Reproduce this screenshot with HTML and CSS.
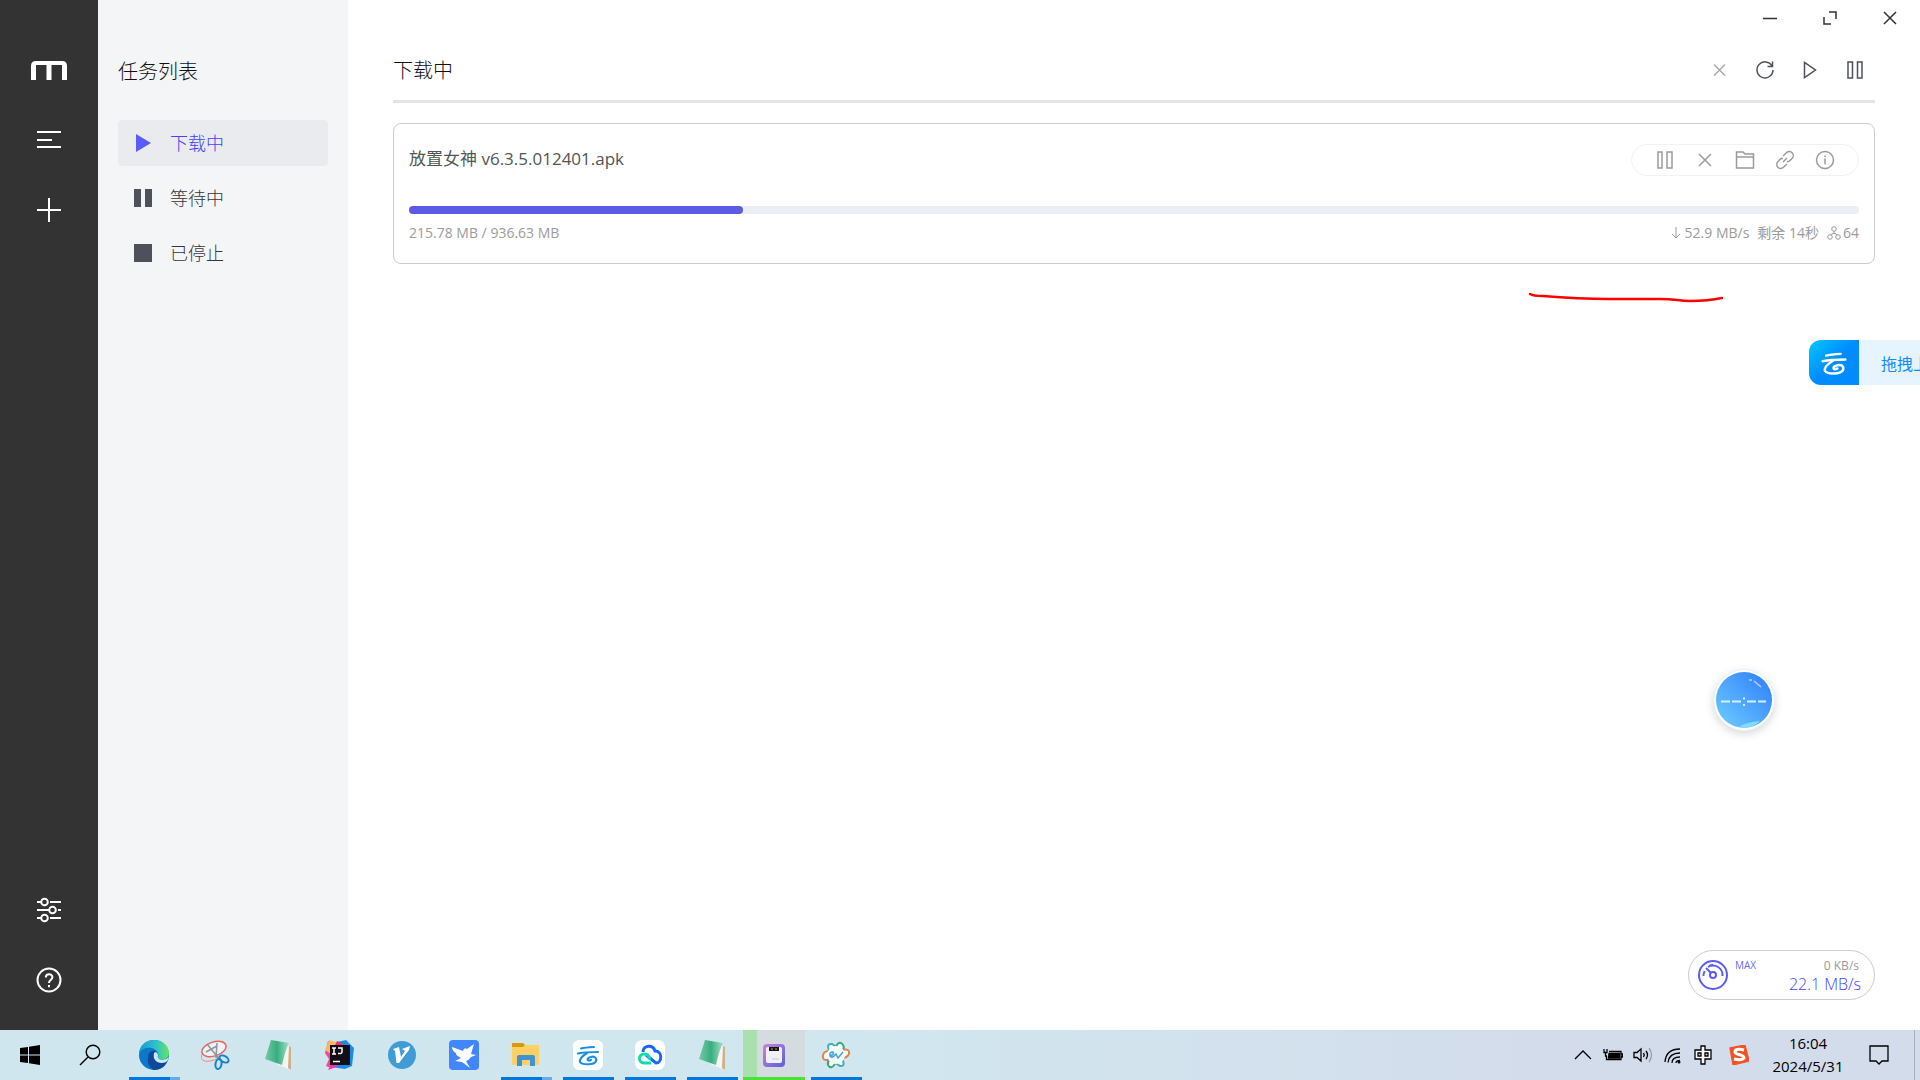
FILE: index.html
```html
<!DOCTYPE html>
<html lang="zh-CN">
<head>
    <meta charset="UTF-8">
    <meta name="viewport" content="width=device-width, initial-scale=1.0">
    <title>下载中</title>
    <link rel="stylesheet" href="styles.css">
</head>
<body>
<div class="app">
    <aside class="sidebar">
        <svg class="logo" width="36" height="20" viewBox="0 0 36 20"><path d="M0 19V5Q0 0 5 0H31Q36 0 36 5V19H31V4H20.500V19H15.500V4H5V19Z" fill="#fff"/></svg>
        <button class="side-btn" aria-label="任务列表"><svg width="26" height="20" viewBox="0 0 26 20"><path d="M1 2H25M1 10H16M1 17H25" stroke="#fff" stroke-width="2"/></svg></button>
        <button class="side-btn" aria-label="新建任务"><svg width="24" height="24" viewBox="0 0 24 24"><path d="M12 0V24M0 12H24" stroke="#fff" stroke-width="2"/></svg></button>
        <button class="side-btn side-bottom" aria-label="偏好设置"><svg width="26" height="26" viewBox="0 0 26 26" fill="none" stroke="#fff" stroke-width="2"><path d="M1 5H5M14 5H25M1 13H13M22 13H25M1 21H5M14 21H25"/><circle cx="8.500" cy="5" r="3.300"/><circle cx="16.500" cy="13" r="3.300"/><circle cx="8.500" cy="21" r="3.300"/></svg></button>
        <button class="side-btn" aria-label="帮助"><svg width="26" height="26" viewBox="0 0 26 26" fill="none" stroke="#fff" stroke-width="2"><circle cx="13" cy="13" r="11.500"/><path d="M9.800 10.500C9.800 6.200 16.400 6.200 16.400 10.300C16.400 12.800 13 12.800 13 16M13 18V20.200"/></svg></button>
    </aside>

    <nav class="subnav">
        <h3>任务列表</h3>
        <a class="nav-item active" href="#"><svg width="18" height="18" viewBox="0 0 18 18"><path d="M2 0L17 9L2 18Z"/></svg>下载中</a>
        <a class="nav-item" href="#"><svg width="18" height="18" viewBox="0 0 18 18"><path d="M0 0H7V18H0ZM11 0H18V18H11Z"/></svg>等待中</a>
        <a class="nav-item" href="#"><svg width="18" height="18" viewBox="0 0 18 18"><path d="M0 0H18V18H0Z"/></svg>已停止</a>
    </nav>

    <main class="main">
        <div class="window-bar">
            <button aria-label="最小化"><svg width="14" height="14" viewBox="0 0 14 14"><path d="M0 7.500H14"/></svg></button>
            <button aria-label="最大化"><svg width="14" height="14" viewBox="0 0 14 14"><path d="M6 1H13V8M1 6V13H8"/></svg></button>
            <button aria-label="关闭"><svg width="14" height="14" viewBox="0 0 14 14"><path d="M1 1L13 13M13 1L1 13"/></svg></button>
        </div>
        <header class="panel-header">
            <h3>下载中</h3>
            <div class="panel-actions">
                <button class="disabled" aria-label="删除任务" disabled><svg width="20" height="20" viewBox="0 0 20 20"><path d="M4 4.500L15 15.500M15 4.500L4 15.500"/></svg></button>
                <button aria-label="刷新"><svg width="20" height="20" viewBox="0 0 20 20"><path d="M17 6A8 8 0 1 0 18 10M17.500 1.500V6.500H12.500"/></svg></button>
                <button aria-label="全部开始"><svg width="20" height="20" viewBox="0 0 20 20"><path d="M4.500 2.500V17.500L15.500 10Z"/></svg></button>
                <button aria-label="全部暂停"><svg width="20" height="20" viewBox="0 0 20 20"><path d="M3 2H7.500V18H3ZM12.500 2H17V18H12.500Z"/></svg></button>
            </div>
        </header>

        <section class="task">
            <div class="task-top">
                <div class="task-name">放置女神 v6.3.5.012401.apk</div>
                <div class="task-actions">
                    <button aria-label="暂停"><svg width="20" height="20" viewBox="0 0 20 20"><path d="M3 2H7V18H3ZM12 2H17V18H12Z"/></svg></button>
                    <button aria-label="删除"><svg width="20" height="20" viewBox="0 0 20 20"><path d="M4 4L16 16M16 4L4 16"/></svg></button>
                    <button aria-label="打开文件夹"><svg width="20" height="20" viewBox="0 0 20 20"><path d="M1.500 18V2H8L10 4H18.500V18ZM1.500 7H18.500"/></svg></button>
                    <button aria-label="复制链接"><svg width="20" height="20" viewBox="0 0 20 20"><path d="M8 6L11.500 2.700A3.800 3.800 0 0 1 17 8.500L15 10.500Q13.500 12 12 11.500M12 14L8.500 17.300A3.800 3.800 0 0 1 3 11.500L5 9.500Q6.500 8 8 8.500M8 12L12 8"/></svg></button>
                    <button aria-label="详情"><svg width="20" height="20" viewBox="0 0 20 20"><circle cx="10" cy="10" r="8.500"/><path d="M10 8.500V14.500M10 5.500V7"/></svg></button>
                </div>
            </div>
            <div class="progress"><div class="progress-fill" style="width: 23.04%"></div></div>
            <div class="task-info">
                <span>215.78 MB / 936.63 MB</span>
                <div class="task-speed">
                    <span><svg width="10" height="12" viewBox="0 0 10 12"><path d="M5 0V11M1 7L5 11L9 7"/></svg>52.9 MB/s</span>
                    <span>剩余 14秒</span>
                    <span class="peers"><svg width="14" height="14" viewBox="0 0 14 14"><circle cx="7" cy="3" r="2.300"/><circle cx="3" cy="11" r="2.300"/><circle cx="11" cy="11" r="2.300"/><path d="M7 5V7.500M4 9Q4 7.500 7 7.500T10 9"/></svg>64</span>
                </div>
            </div>
        </section>
    </main>

    <div class="speedometer">
        <svg width="30" height="30" viewBox="0 0 30 30" fill="none" stroke="#5b5bfa" stroke-width="2"><circle cx="15" cy="15" r="14"/><circle cx="15" cy="15" r="3"/><path d="M13 13L8 8M10 7A9.500 9.500 0 0 1 24.500 16M11 5.800A10 10 0 0 1 15 5M5.500 16A9.500 9.500 0 0 1 6.700 11"/></svg>
        <em>MAX</em>
        <div class="speed-values">
            <span class="upload">0 KB/s</span>
            <span class="download">22.1 MB/s</span>
        </div>
    </div>

    <svg class="pen-line" width="200" height="16" viewBox="0 0 200 16"><path d="M2 4Q5 6 15 6Q50 9 82 9T132 9C148 9 150 11 162 11Q180 11 194 8" fill="none" stroke="#f00" stroke-width="2.500" stroke-linecap="round"/></svg>

    <div class="upload-dock">
        <div class="dock-icon"><svg width="34" height="34" viewBox="0 0 30 30" fill="none" stroke="#fff" stroke-linecap="round"><use href="#yun"/></svg></div>
        <span>拖拽上</span>
    </div>

    <svg class="ball" width="76" height="76" viewBox="0 0 76 76">
        <defs><linearGradient id="ballFill" x1="0" y1="1" x2="1" y2="0"><stop offset="0" stop-color="#70ceff"/><stop offset="1" stop-color="#2c7cff"/></linearGradient></defs>
        <circle cx="38" cy="38" r="30.500" fill="#fff" stroke="#e1f1fb"/>
        <circle cx="38" cy="38" r="28" fill="url(#ballFill)"/>
        <path d="M33 65Q40 60 54 59Q47 66 38 66Z" fill="#81ddff"/>
        <path d="M15 39.500H24M26 39.500H35M41 39.500H50M52 39.500H60" stroke="#d5efff" stroke-width="2"/>
        <path d="M43 18H46M48 19L55 25" stroke="#b2d4ff" stroke-width="1.500" fill="none"/>
        <circle cx="38" cy="36.500" r="1" fill="#fff"/><circle cx="38" cy="43" r="1" fill="#fff"/>
    </svg>
</div>

<footer class="taskbar">
    <button class="tb-system" aria-label="开始"><svg width="20" height="20" viewBox="0 0 20 20"><path d="M0 3L8 2V9.500H0ZM9 1.800L20 0V9.500H9ZM0 10.500H8V18L0 17ZM9 10.500H20V20L9 18.200Z"/></svg></button>
    <button class="tb-system" aria-label="搜索"><svg width="22" height="22" viewBox="0 0 22 22" fill="none" stroke="#000" stroke-width="1.500"><circle cx="14" cy="8" r="6.800"/><path d="M9 13L1 21"/></svg></button>
    <div class="tb-apps">
        <button class="tb-app running multi" aria-label="Edge"><svg width="30" height="30" viewBox="0 0 30 30">
            <defs><linearGradient id="edgeTop"><stop offset="0" stop-color="#159bd7"/><stop offset=".6" stop-color="#33c4c5"/><stop offset="1" stop-color="#65e65b"/></linearGradient></defs>
            <circle cx="15" cy="15" r="15" fill="#0b78c9"/><path d="M0 13C1 5 7 0 15 0C24 0 30 6 30 13C30 19 24 21 20 19C18 18 20 17 19 13C17 7 5 5 0 13Z" fill="url(#edgeTop)"/><path d="M9 18C9 12 13 10 17 11Q12 14 15 19Q20 25 28 22Q24 30 15 30C11 28 8 24 9 18Z" fill="#10499a"/><path d="M15 13Q18 11 19 15Q18 18 21 19.500Q26 21 30 17Q29 21 27 22Q18 25 15 18Z" fill="#d1e7ee"/></svg></button>
        <button class="tb-app" aria-label="截图工具"><svg width="30" height="30" viewBox="0 0 30 30" fill="none"><ellipse cx="13" cy="9" rx="12.500" ry="7" transform="rotate(-18 13 9)" fill="#edf2f5" stroke="#ee6262" stroke-width="1.500"/><path d="M1 14C-2 22 6 23 16 19" stroke="#e88"/><path d="M6 4L19 20M16 3L15 18M5 12L16 6" stroke="#8c969b" stroke-width="1.500"/><ellipse cx="17.500" cy="24" rx="3" ry="5" transform="rotate(10 17.500 24)" stroke="#1482cf" stroke-width="2"/><ellipse cx="23" cy="19" rx="5" ry="3" transform="rotate(30 23 19)" stroke="#1482cf" stroke-width="2"/></svg></button>
        <button class="tb-app" aria-label="笔记"><svg width="30" height="30" viewBox="0 0 30 30"><use href="#book"/></svg></button>
        <button class="tb-app" aria-label="IntelliJ IDEA"><svg width="30" height="30" viewBox="0 0 30 30"><path d="M3 1L13 3L6 28L1 26L4 19L0 13Z" fill="#f44792"/><path d="M4 0L14 3L6 14L0 10Z" fill="#f9b66b"/><path d="M12 2L21 0L29 8L27 26L20 29L6 27L20 12Z" fill="#188ce9"/><path d="M12 1L18 4V12H7Z" fill="#f72d65"/><path d="M7 23L3 30L14 26Z" fill="#ef35a9"/><rect x="5" y="5" width="20" height="20" fill="#130d16"/><path d="M7 8H11M9 8V14M7 14H11M13 8H17V12Q17 14 13 13.500M8 21.500H15" stroke="#fff" stroke-width="1.500" fill="none"/></svg></button>
        <button class="tb-app" aria-label="V"><svg width="30" height="30" viewBox="0 0 30 30"><circle cx="15" cy="15" r="14" fill="#409cd5"/><path d="M6 9L12 7L14 17L18 11L15 9L23 6L22 10L12 23H9.500L8 11Z" fill="#fff"/></svg></button>
        <button class="tb-app" aria-label="飞鸟"><svg width="30" height="30" viewBox="0 0 30 30"><rect width="30" height="30" rx="4" fill="#4186fc"/><path d="M3 7L14 11Q15 7 18 9L25 4L22 14L27 15L22 17Q20 20 17 21L21 28L13 22L6 21L12 18Q6 15 7 13Q3 11 3 7Z" fill="#fff"/></svg></button>
        <button class="tb-app running multi" aria-label="文件资源管理器"><svg width="30" height="30" viewBox="0 0 30 30"><path d="M1 3H12L14 5V9H1Z" fill="#df9700"/><path d="M1 7H12L14 5H28V25H1Z" fill="#ffd064"/><path d="M6 26V17Q6 15 8 15H22Q24 15 24 17V26H19V20H11V26Z" fill="#4093d0"/></svg></button>
        <button class="tb-app running" aria-label="天翼云盘"><svg width="30" height="30" viewBox="0 0 30 30" fill="none" stroke="#188fe7" stroke-linecap="round"><defs><g id="yun"><path d="M8 8.500Q12 7.500 21 7" stroke-width="2"/><path d="M5 13.500Q12 12 25 12" stroke-width="2.200"/><path d="M14 13Q6 18 7 22Q9 25 18 24C26 23 24 15 18 17C13 18 14 22 18 20" stroke-width="2.200"/></g></defs><rect width="30" height="30" rx="6" fill="#fff" stroke="none"/><use href="#yun"/></svg></button>
        <button class="tb-app running" aria-label="微云"><svg width="30" height="30" viewBox="0 0 30 30" fill="none" stroke-width="3"><rect width="30" height="30" rx="7" fill="#fff"/><path d="M8 12C8 5 18 4 20 11C28 11 27 23 21 23L11 15" stroke="#1768ff"/><path d="M16 23H9C3 23 3 14 9 14C14 14 15 18 14 20" stroke="#12dcaa"/></svg></button>
        <button class="tb-app running" aria-label="笔记"><svg width="30" height="30" viewBox="0 0 30 30"><defs><linearGradient id="bookFill" x2="1"><stop offset="0" stop-color="#77c8a7"/><stop offset=".5" stop-color="#37ae7f"/><stop offset="1" stop-color="#a5dec8"/></linearGradient><g id="book"><path d="M22 5L28 7V30L13 24Z" fill="#f5f5f1"/><path d="M26 6L28 7V30L25 28Z" fill="#ceb18a"/><path d="M8 0L26 3Q22 11 19 25L2 19Z" fill="url(#bookFill)"/></g></defs><use href="#book"/></svg></button>
        <button class="tb-app running downloading" aria-label="Motrix"><svg width="30" height="30" viewBox="0 0 30 30"><defs><linearGradient id="motrixFill" x2="1" y2="1"><stop offset="0" stop-color="#cc83d9"/><stop offset="1" stop-color="#5861d8"/></linearGradient></defs><rect x="4" y="4" width="22" height="23" rx="4" fill="url(#motrixFill)"/><rect x="7" y="7" width="16" height="16" rx="2" fill="#f2f0f7"/><path d="M10 7H20V11H10Z" fill="#17171b"/><path d="M12 9H14M16 9H18" stroke="#c2a52b"/><path d="M13 19H20" stroke="#c9c7d0"/></svg></button>
        <button class="tb-app running" aria-label="EV录屏"><svg width="30" height="30" viewBox="0 0 30 30" fill="none" stroke-width="2"><path d="M15 6Q19 0 22 5Q24 8 21 11M14 24Q10 30 7 25Q6 22 9 19" fill="#f4faf7" stroke="#39a67c"/><path d="M21 10Q29 8 28 14Q26 18 21 18M9 19Q1 22 2 15Q3 11 8 11" fill="#f7f8f3" stroke="#d58b50"/><path d="M8 11Q5 3 11 4L17 8M21 19Q25 27 19 26L13 22" fill="#f5fbfa" stroke="#43adb9"/><circle cx="15" cy="15" r="9" fill="#f4fbfc"/><path d="M9 16Q14 14 12 12Q8 12 9 16Q11 19 15 14L17 18L22 12" stroke="#46a3d4" stroke-width="1.500"/></svg></button>
    </div>

    <div class="tray">
        <button aria-label="显示隐藏的图标"><svg width="18" height="20" viewBox="0 0 18 20"><path d="M1 14L9 6L17 14"/></svg></button>
        <button aria-label="电池"><svg width="20" height="20" viewBox="0 0 20 20"><path d="M6 6.500H18V14.500H3.500V11M18 9H19.500V12H18M1 4V7.500H4V4M2.500 8V11H4"/><path d="M6 8.500H16.500V13H5.500Z" fill="#000"/></svg></button>
        <button aria-label="音量"><svg width="20" height="20" viewBox="0 0 20 20"><path d="M1 7.500H4L8 4V16L4 12.500H1ZM10.500 8Q12 10 10.500 12M13 6Q16 10 13 14"/><path d="M16 3Q21 10 16 17" stroke="#98a0ab"/></svg></button>
        <button aria-label="网络"><svg width="20" height="20" viewBox="0 0 20 20"><path d="M2 17Q3 4 17 4M5 17.500Q6 8 17 8M9 18Q9 12 17 12M13 18Q13 15.500 17 15.500"/><circle cx="16" cy="17" r="1.500" fill="#000" stroke="none"/></svg></button>
        <button aria-label="中文输入"><svg width="20" height="20" viewBox="0 0 20 20"><path d="M8 1H12V5H18V14H12V19H8V14H2V5H8ZM5 8V11H8V8ZM12 8V11H15V8Z" fill="#f5f7fa" fill-rule="evenodd"/></svg></button>
        <button class="sogou" aria-label="搜狗输入法"><svg width="20" height="20" viewBox="0 0 20 20"><path d="M1 3L16 0L20 16L4 20Z" fill="#f05324" stroke="#f05324"/><path d="M15 5Q6 3 6 7C6 10 15 9 15 13Q13 16 5 14" stroke="#fff" stroke-width="3"/></svg></button>
        <div class="clock"><span>16:04</span><span>2024/5/31</span></div>
        <button class="notice" aria-label="通知"><svg width="20" height="20" viewBox="0 0 20 20"><path d="M1 1H19V16H13L10 19L7 16H1Z"/></svg></button>
        <div class="show-desktop"></div>
    </div>
</footer>
</body>
</html>
```

FILE: styles.css
```css
* { box-sizing: border-box; }
body {
    margin: 0;
    height: 100vh;
    display: flex;
    flex-direction: column;
    overflow: hidden;
    font-family: "Open Sans", "Noto Sans CJK SC", sans-serif;
    font-weight: 300;
    color: #111;
}
h3 { margin: 0; padding-top: 2px; font-size: 20px; line-height: 28px; font-weight: 300; }
button { display: flex; align-items: center; justify-content: center; padding: 0; border: 0; background: none; cursor: pointer; }
svg { display: block; flex: none; }

.app { position: relative; flex: 1; min-height: 0; display: flex; overflow: hidden; background: #fff; }

/* sidebar */
.sidebar { width: 98px; padding: 61px 0 30px; display: flex; flex-direction: column; align-items: center; gap: 30px; background: #333; }
.logo { margin-bottom: 9px; }
.side-btn { width: 40px; height: 40px; }
.side-bottom { margin-top: auto; }

/* task list */
.subnav { width: 250px; padding: 56px 20px; display: flex; flex-direction: column; gap: 9px; background: #f4f5f7; }
.subnav h3 { margin-bottom: 25px; }
.nav-item { height: 46px; padding: 0 16px; display: flex; align-items: center; gap: 18px; border-radius: 4px; font-size: 18px; line-height: 24px; color: #33363d; text-decoration: none; }
.nav-item svg { fill: #4d515a; }
.nav-item.active { background: #eaebef; color: #4343fa; }
.nav-item.active svg { fill: #5b5bfa; }

/* main panel */
.main { flex: 1; min-width: 0; padding: 0 45px; }
.window-bar { height: 40px; margin-right: -45px; display: flex; justify-content: flex-end; }
.window-bar button { width: 60px; height: 36px; }
.window-bar svg { fill: none; stroke: #333; stroke-width: 1.5; }
.panel-header { height: 63px; display: flex; align-items: center; justify-content: space-between; border-bottom: 3px solid #e4e4e4; }
.panel-actions { display: flex; gap: 25px; padding-right: 10px; }
.panel-actions svg { fill: none; stroke: #4d515a; stroke-width: 1.5; }
.panel-actions .disabled svg { stroke: #a6a8ad; }

.task { margin-top: 20px; padding: 20px 15px; border: 1px solid #ccc; border-radius: 8px; }
.task-top { display: flex; align-items: center; justify-content: space-between; }
.task-name { padding-bottom: 2px; font-size: 17px; line-height: 24px; font-weight: 400; color: #505753; }
.task-actions { display: flex; height: 32px; padding: 0 13px; border: 1px solid #f2f2f2; border-radius: 16px; }
.task-actions button { width: 40px; }
.task-actions svg { fill: none; stroke: #9b9b9b; stroke-width: 1.5; }
.progress { height: 8px; margin-top: 30px; border-radius: 4px; background: #ebeef5; }
.progress-fill { height: 8px; border-radius: 4px; background: #5b5be6; }
.task-info { margin-top: 9px; display: flex; justify-content: space-between; font-size: 14px; line-height: 20px; font-weight: 400; color: #9b9b9b; }
.task-speed { display: flex; gap: 8px; }
.task-speed span { display: flex; align-items: center; gap: 4px; }
.task-speed .peers { gap: 2px; }
.task-speed svg { fill: none; stroke: #9b9b9b; stroke-width: 1; }

/* floating things */
.speedometer { position: absolute; right: 45px; bottom: 30px; width: 187px; height: 50px; padding: 0 13px 0 9px; display: flex; align-items: center; border: 1px solid #ccc; border-radius: 25px; background: #fff; }
.speedometer em { align-self: flex-start; margin: 7px 0 0 7px; font-size: 10px; line-height: 14px; font-style: normal; font-weight: 400; color: #6b6bfa; }
.speed-values { margin-left: auto; padding-top: 2px; display: flex; flex-direction: column; align-items: flex-end; }
.upload { padding-right: 2px; font-size: 12px; line-height: 16px; color: #9b9b9b; font-weight: 400; }
.download { font-size: 16px; line-height: 20px; color: #4343fa; }
.pen-line { position: absolute; top: 290px; right: 192px; }
.upload-dock { position: absolute; top: 340px; right: 0; width: 111px; height: 45px; display: flex; align-items: center; overflow: hidden; border-radius: 12px 0 0 12px; background: #e6f4ff; }
.dock-icon { flex: none; width: 50px; height: 45px; display: flex; align-items: center; justify-content: center; background: linear-gradient(135deg, #00c8ff, #008cff 50%); }
.upload-dock span { margin-left: 22px; font-size: 16px; font-weight: 400; white-space: nowrap; color: #138bfa; }
.ball { position: absolute; top: 662px; right: 138px; filter: drop-shadow(0 3px 4px rgba(0, 0, 0, 0.15)); }

/* taskbar */
.taskbar { flex: none; height: 50px; display: flex; background: linear-gradient(90deg, #d0e6ee 0%, #d1e7ef 45%, #d3dceb 80%, #d3dcea 100%); }
.tb-system { width: 60px; }
.tb-apps { margin-left: 3px; display: flex; }
.tb-app { position: relative; width: 62px; }
.tb-app.running::after { content: ""; position: absolute; left: 6px; right: 5px; bottom: 0; height: 3px; background: #0078d7; }
.tb-app.multi::after { background: linear-gradient(90deg, #0078d7 80%, #66ade8 80%); }
.tb-app.downloading { background: linear-gradient(90deg, #abdfad 23%, #d5dcdf 23%); }
.tb-app.downloading::after { left: 0; right: 0; background: #4be235; }
.tray { margin-left: auto; display: flex; align-items: center; }
.tray button { width: 30px; height: 50px; }
.tray svg { fill: none; stroke: #000; stroke-width: 1.3; }
.tray .sogou { width: 42px; }
.clock { width: 96px; display: flex; flex-direction: column; align-items: center; font-size: 15px; line-height: 23px; font-weight: 400; color: #000; }
.tray .notice { width: 46px; }
.show-desktop { width: 6px; height: 50px; margin-left: 12px; border-left: 1px solid #a7b0bf; }
```
